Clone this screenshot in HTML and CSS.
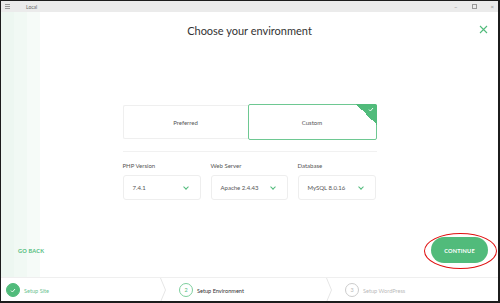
FILE: index.html
```html
<!DOCTYPE html>
<html lang="en">
<head>
  <meta charset="UTF-8" />
  <title>Local - Choose your environment</title>
  <link rel="stylesheet" href="styles.css">
</head>
<body>
  <div class="window">
    <div class="titlebar">
      <span class="menu-icon"><i></i><i></i><i></i></span>
      <span class="app-name">Local</span>
      <span class="controls">
        <span class="ctl">&#8211;</span>
        <span class="ctl max"></span>
        <span class="ctl">&#215;</span>
      </span>
    </div>

    <div class="main">
      <div class="header">
        <h2>Choose your environment</h2>
        <svg class="close" width="9" height="9" viewBox="0 0 9 9">
          <path d="M1 1 L8 8 M8 1 L1 8" stroke="#51bb7b" stroke-width="1.1" fill="none"/>
        </svg>
      </div>

      <div class="column">
        <div class="choice-row">
          <div class="choice">Preferred</div>
          <div class="choice active">
            Custom
            <span class="corner">
              <svg width="6" height="5" viewBox="0 0 6 5"><path d="M1 2.6 L2.4 4 L5 1" stroke="#fff" stroke-width="0.9" fill="none"/></svg>
            </span>
          </div>
        </div>

        <div class="fields">
          <div class="field">
            <label>PHP Version</label>
            <div class="select">7.4.1 <span class="chev"></span></div>
          </div>
          <div class="field">
            <label>Web Server</label>
            <div class="select">Apache 2.4.43 <span class="chev"></span></div>
          </div>
          <div class="field">
            <label>Database</label>
            <div class="select">MySQL 8.0.16 <span class="chev"></span></div>
          </div>
        </div>
      </div>

      <div class="actions">
        <a class="go-back">GO BACK</a>
        <div class="continue-wrap">
          <button class="continue">CONTINUE</button>
          <span class="ring"></span>
        </div>
      </div>
    </div>

    <div class="steps">
      <div class="step done">
        <span class="dot">
          <svg width="6" height="5" viewBox="0 0 6 5"><path d="M1 2.6 L2.4 4 L5 1" stroke="#fff" stroke-width="0.9" fill="none"/></svg>
        </span>
        <span class="step-name">Setup Site</span>
        <svg class="sep" width="6" height="24" viewBox="0 0 6 24"><path d="M0.5 0 L5.5 12 L0.5 24" stroke="#e6e6e6" fill="none"/></svg>
      </div>
      <div class="step current">
        <span class="dot">2</span>
        <span class="step-name">Setup Environment</span>
        <svg class="sep" width="6" height="24" viewBox="0 0 6 24"><path d="M0.5 0 L5.5 12 L0.5 24" stroke="#e6e6e6" fill="none"/></svg>
      </div>
      <div class="step">
        <span class="dot">3</span>
        <span class="step-name">Setup WordPress</span>
      </div>
    </div>
  </div>
</body>
</html>
```

FILE: styles.css
```css
* {
  box-sizing: border-box;
}

body {
  margin: 0;
  background: #fff;
  font-family: 'Lato', 'Noto Sans', sans-serif;
  color: #333;
}

.window {
  width: 500px;
  height: 303px;
  border: 1px solid #1c1c1c;
  border-right-width: 2px;
  border-bottom-width: 2px;
  display: flex;
  flex-direction: column;
  overflow: hidden;
}

/* title bar */
.titlebar {
  height: 11px;
  background: #ebebeb;
  display: flex;
  align-items: center;
  font-size: 5px;
  color: #666;
}

.menu-icon {
  display: flex;
  flex-direction: column;
  gap: 1px;
  width: 5px;
  margin-left: 4px;
}

.menu-icon i {
  height: 1px;
  background: #999;
}

.app-name {
  margin-left: 16px;
}

.controls {
  margin-left: auto;
  display: flex;
  align-items: center;
  gap: 14px;
  margin-right: 4px;
  color: #888;
  font-size: 6px;
}

.ctl.max {
  width: 5px;
  height: 5px;
  border: 1px solid #999;
}

/* main area */
.main {
  flex: 1;
  display: flex;
  flex-direction: column;
  background: linear-gradient(to right, #edf7f1 0 13px, #f1f9f4 13px 26px, #f6fbf8 26px 39px, #fff 39px);
}

.header {
  display: flex;
  align-items: center;
  justify-content: center;
  padding-top: 11px;
  position: relative;
}

.header h2 {
  margin: 0;
  font-size: 11px;
  line-height: 16px;
  font-weight: 400;
  color: #333;
}

.close {
  position: absolute;
  right: 10px;
  top: 13px;
}

.column {
  width: 254px;
  margin: 65px auto 0;
}

.choice-row {
  display: grid;
  grid-template-columns: 125px 129px;
  align-items: center;
  padding-bottom: 11px;
  border-bottom: 1px solid #f1f1f1;
}

.choice {
  height: 34px;
  display: flex;
  align-items: center;
  justify-content: center;
  border: 1px solid #efefef;
  border-right: none;
  border-radius: 2px 0 0 2px;
  font-size: 6px;
  color: #555;
}

.choice.active {
  height: 36px;
  border: 1.5px solid #6ec892;
  border-radius: 2px;
  position: relative;
}

.corner {
  position: absolute;
  top: -1px;
  right: -1px;
  width: 21px;
  height: 21px;
  background: linear-gradient(to bottom left, #51bb7b 50%, transparent 50%);
  border-top-right-radius: 2px;
}

.corner svg {
  position: absolute;
  top: 3px;
  right: 3px;
}

.fields {
  display: grid;
  grid-template-columns: 78px 77px 78px;
  gap: 10px;
  margin-top: 10px;
}

.field label {
  display: block;
  font-size: 6px;
  line-height: 8px;
  color: #555;
  margin-bottom: 5px;
}

.select {
  height: 25px;
  border: 1px solid #eeeeee;
  border-radius: 3px;
  display: flex;
  align-items: center;
  padding: 0 9px;
  font-size: 6px;
  color: #555;
}

.chev {
  margin-left: auto;
  width: 4px;
  height: 4px;
  border-right: 1px solid #51bb7b;
  border-bottom: 1px solid #51bb7b;
  transform: rotate(45deg);
  margin-top: -2px;
  margin-right: 3px;
}

/* footer actions */
.actions {
  margin-top: auto;
  margin-bottom: 14px;
  display: flex;
  align-items: center;
  justify-content: space-between;
  padding: 0 10px 0 17px;
}

.go-back {
  font-size: 5.6px;
  font-weight: 700;
  color: #51bb7b;
  letter-spacing: 0.2px;
}

.continue-wrap {
  position: relative;
}

.continue {
  width: 57px;
  height: 26px;
  border: none;
  border-radius: 13px;
  background: #51bb7b;
  color: #fff;
  font-family: inherit;
  font-size: 5.6px;
  font-weight: 700;
  letter-spacing: 0.2px;
  display: block;
}

.ring {
  position: absolute;
  left: -7px;
  top: -4px;
  width: 73px;
  height: 36px;
  border: 1.5px solid #e01010;
  border-radius: 50%;
}

/* steps */
.steps {
  height: 24px;
  border-top: 1px solid #efefef;
  display: grid;
  grid-template-columns: 165px 166px 1fr;
}

.step {
  display: flex;
  align-items: center;
  padding-left: 5px;
  font-size: 5.6px;
  color: #bbb;
}

.step + .step {
  padding-left: 13px;
}

.dot {
  width: 14px;
  height: 14px;
  border-radius: 50%;
  border: 1px solid #ccc;
  display: flex;
  align-items: center;
  justify-content: center;
  font-size: 5.5px;
  margin-right: 4px;
}

.step.done .dot {
  background: #51bb7b;
  border-color: #51bb7b;
}

.step.done .step-name {
  color: #6cc491;
}

.step.current .dot {
  border: 1.2px solid #7dcf9d;
  color: #51bb7b;
}

.step.current .step-name {
  color: #333;
}

.sep {
  margin-left: auto;
}
```
